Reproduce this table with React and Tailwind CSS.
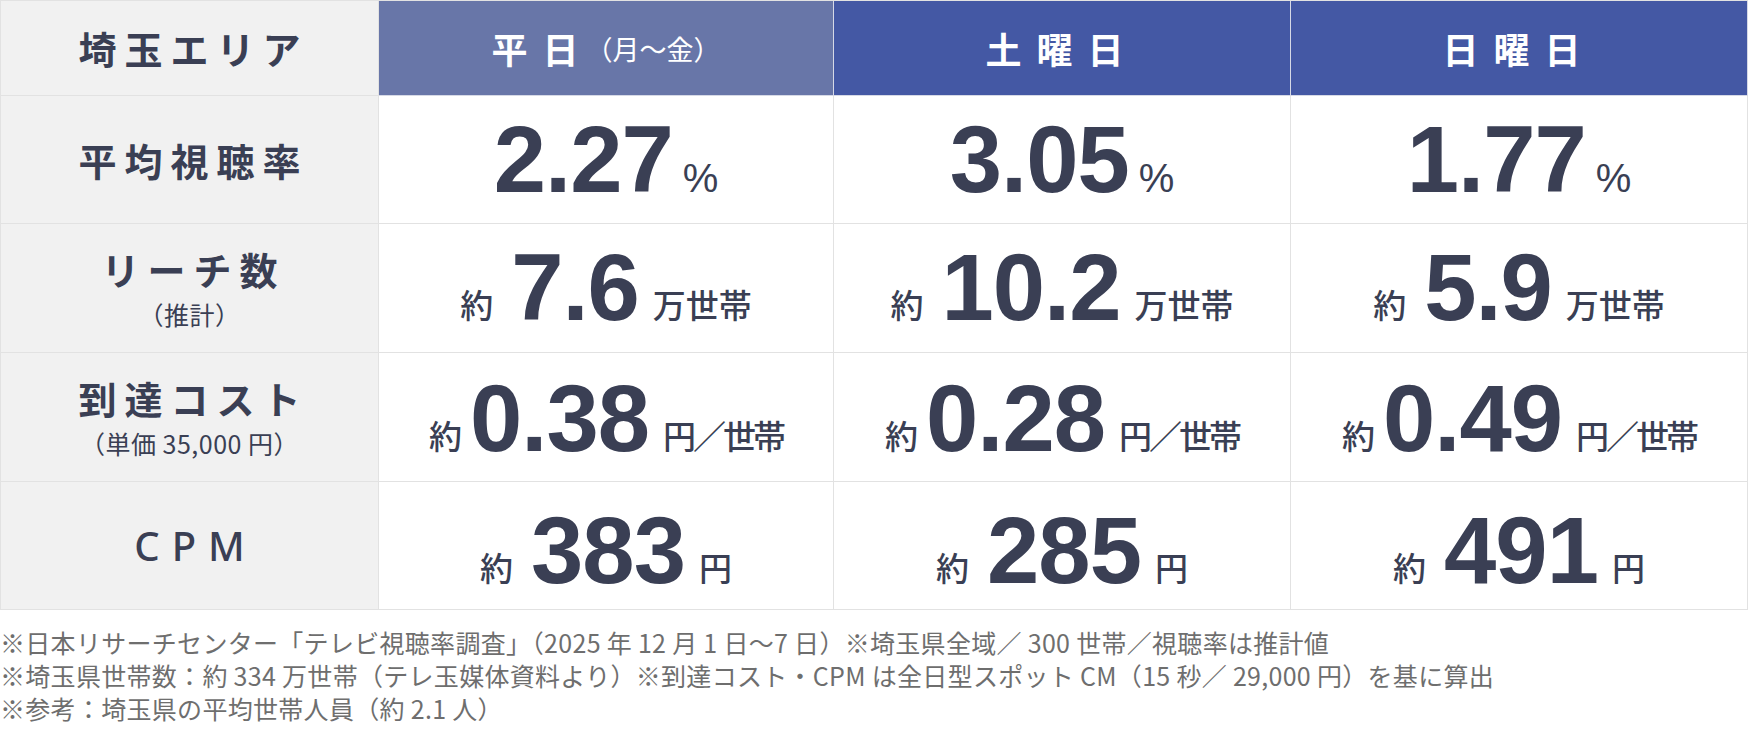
import React from 'react';

const jp = { fontFamily: '"Noto Sans CJK JP", "Noto Sans", sans-serif' };
const num = { fontFamily: '"Liberation Sans", Arial, sans-serif' };

const heads = [
  { label: '平日', sub: '（月〜金）', bg: 'bg-[#6876a8]' },
  { label: '土曜日', bg: 'bg-[#4458a4]' },
  { label: '日曜日', bg: 'bg-[#4458a4]' },
];

const rows = [
  {
    label: '平均視聴率',
    h: 'h-[128px]',
    pad: 'pt-0',
    cells: [
      { value: '2.27', post: '%', kind: 'pct' },
      { value: '3.05', post: '%', kind: 'pct' },
      { value: '1.77', post: '%', kind: 'pct' },
    ],
  },
  {
    label: 'リーチ数',
    sub: '（推計）',
    h: 'h-[129px]',
    pad: 'pt-0',
    cells: [
      { pre: '約', value: '7.6', post: '万世帯', kind: 'spaced' },
      { pre: '約', value: '10.2', post: '万世帯', kind: 'spaced' },
      { pre: '約', value: '5.9', post: '万世帯', kind: 'spaced' },
    ],
  },
  {
    label: '到達コスト',
    sub: '（単価 35,000 円）',
    h: 'h-[129px]',
    pad: 'pt-[4px]',
    cells: [
      { pre: '約', value: '0.38', post: '円／世帯', kind: 'tight' },
      { pre: '約', value: '0.28', post: '円／世帯', kind: 'tight' },
      { pre: '約', value: '0.49', post: '円／世帯', kind: 'tight' },
    ],
  },
  {
    label: 'CPM',
    latin: true,
    h: 'h-[128px]',
    pad: 'pt-[10px]',
    cells: [
      { pre: '約', value: '383', post: '円', kind: 'spaced' },
      { pre: '約', value: '285', post: '円', kind: 'spaced' },
      { pre: '約', value: '491', post: '円', kind: 'spaced' },
    ],
  },
];

function Value({ cell }) {
  const gapPre = cell.kind === 'tight' ? 'mr-[8px]' : 'mr-[18px]';
  const gapPost = cell.kind === 'pct' ? 'ml-[10px]' : 'ml-[14px]';
  const postTrack = cell.kind === 'tight' ? 'tracking-[-3px]' : '';
  return (
    <div className="flex items-baseline text-[#3a3f54]">
      {cell.pre && (
        <span style={jp} className={`text-[33px] font-medium leading-none relative -top-[2px] ${gapPre}`}>
          {cell.pre}
        </span>
      )}
      <span style={num} className="text-[94px] font-bold leading-none tracking-[-1px]">
        {cell.value}
      </span>
      {cell.kind === 'pct' ? (
        <span style={num} className={`text-[40px] font-normal leading-none ${gapPost}`}>
          {cell.post}
        </span>
      ) : (
        <span style={jp} className={`text-[33px] font-medium leading-none relative -top-[2px] ${postTrack} ${gapPost}`}>
          {cell.post}
        </span>
      )}
    </div>
  );
}

export default function App() {
  return (
    <div className="w-[1748px] h-[736px] bg-white text-[#3a3f54]" style={jp}>
      <div className="grid grid-cols-[378px_455px_457px_457px] border-t border-l border-[#e2e2e2]">
        <div className="h-[95px] bg-[#f1f1f1] border-r border-b border-[#e2e2e2] flex items-center justify-center">
          <span className="text-[38px] font-bold tracking-[8px] pl-[8px] leading-none">埼玉エリア</span>
        </div>
        {heads.map(h => (
          <div
            key={h.label}
            className={`h-[95px] ${h.bg} border-r border-b border-[#d6d9e6] flex items-center justify-center text-white`}
          >
            <span className="text-[36px] font-bold tracking-[15px] leading-none">{h.label}</span>
            {h.sub && <span className="text-[27px] font-normal leading-none -ml-[8px]">{h.sub}</span>}
          </div>
        ))}

        {rows.map(r => (
          <React.Fragment key={r.label}>
            <div
              className={`${r.h} bg-[#f1f1f1] border-r border-b border-[#e2e2e2] flex flex-col items-center justify-center`}
            >
              {r.latin ? (
                <span style={{ fontFamily: '"Noto Sans", sans-serif' }} className="text-[40px] font-medium tracking-[12px] pl-[12px] leading-none">
                  {r.label}
                </span>
              ) : (
                <span className="text-[38px] font-bold tracking-[8px] pl-[8px] leading-none">{r.label}</span>
              )}
              {r.sub && <span className="text-[25px] font-normal leading-none mt-[14px] tracking-[0.5px]">{r.sub}</span>}
            </div>
            {r.cells.map((c, i) => (
              <div
                key={i}
                className={`${r.h} ${r.pad} bg-white border-r border-b border-[#e2e2e2] flex items-center justify-center`}
              >
                <Value cell={c} />
              </div>
            ))}
          </React.Fragment>
        ))}
      </div>

      <div className="pt-[16px] text-[25px] leading-[33px] tracking-[0.3px] text-[#6e6e6e]">
        <p>※日本リサーチセンター「テレビ視聴率調査」（2025 年 12 月 1 日〜7 日）※埼玉県全域／ 300 世帯／視聴率は推計値</p>
        <p>※埼玉県世帯数：約 334 万世帯（テレ玉媒体資料より）※到達コスト・CPM は全日型スポット CM（15 秒／ 29,000 円）を基に算出</p>
        <p>※参考：埼玉県の平均世帯人員（約 2.1 人）</p>
      </div>
    </div>
  );
}
